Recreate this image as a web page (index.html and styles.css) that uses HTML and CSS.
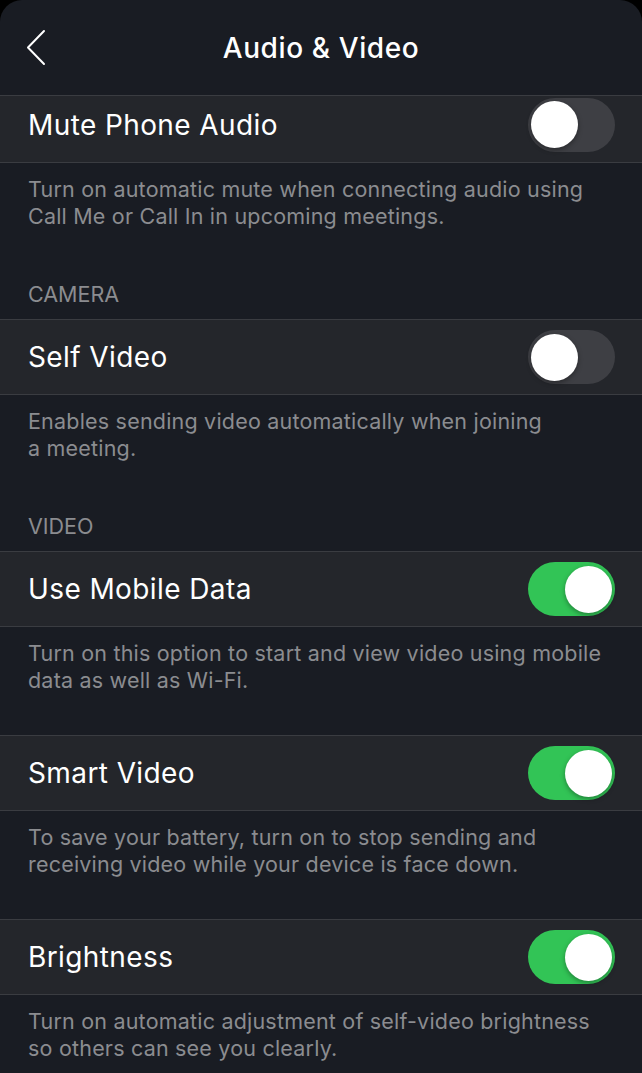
FILE: index.html
```html
<!DOCTYPE html>
<html>
<head>
<meta charset="utf-8">
<link rel="stylesheet" href="styles.css">
</head>
<body>
<div class="screen">
  <header class="nav">
    <svg class="back" width="24" height="40" viewBox="0 0 24 40"><path d="M18 2 L2 18.5 L18 35" fill="none" stroke="#fff" stroke-width="2" stroke-linecap="round" stroke-linejoin="round"/></svg>
    <h1 class="title">Audio &amp; Video</h1>
  </header>
  <main class="content">
    <div class="row row-cut">
      <span class="label">Mute Phone Audio</span>
      <span class="toggle"><span class="knob"></span></span>
    </div>
    <p class="desc">Turn on automatic mute when connecting audio using Call Me or Call In in upcoming meetings.</p>

    <div class="section">CAMERA</div>
    <div class="row">
      <span class="label">Self Video</span>
      <span class="toggle"><span class="knob"></span></span>
    </div>
    <p class="desc">Enables sending video automatically when joining<br>a meeting.</p>

    <div class="section">VIDEO</div>
    <div class="row">
      <span class="label">Use Mobile Data</span>
      <span class="toggle on"><span class="knob"></span></span>
    </div>
    <p class="desc">Turn on this option to start and view video using mobile data as well as Wi-Fi.</p>

    <div class="row">
      <span class="label">Smart Video</span>
      <span class="toggle on"><span class="knob"></span></span>
    </div>
    <p class="desc">To save your battery, turn on to stop sending and receiving video while your device is face down.</p>

    <div class="row">
      <span class="label">Brightness</span>
      <span class="toggle on"><span class="knob"></span></span>
    </div>
    <p class="desc">Turn on automatic adjustment of self-video brightness so others can see you clearly.</p>
  </main>
</div>
</body>
</html>
```
FILE: styles.css
```css
html, body {
  margin: 0;
  padding: 0;
  background: #000;
}
.screen {
  width: 642px;
  height: 1073px;
  overflow: hidden;
  background: #191c23;
  border-radius: 22px 22px 0 0;
  font-family: Inter, "Noto Sans", sans-serif;
  color: #fff;
}
.nav {
  height: 95px;
  border-bottom: 1px solid #3a3c41;
  display: flex;
  align-items: center;
  justify-content: center;
  position: relative;
}
.back {
  position: absolute;
  left: 26px;
  top: 29px;
}
.title {
  margin: 0;
  font-size: 28px;
  font-weight: 500;
  letter-spacing: 0.6px;
}
.content {
  display: flex;
  flex-direction: column;
}
.row {
  height: 74px;
  background: #24262b;
  border-top: 1px solid #3a3c41;
  border-bottom: 1px solid #3a3c41;
  display: flex;
  align-items: center;
  justify-content: space-between;
  padding: 0 27px 0 28px;
  box-sizing: content-box;
}
.row-cut {
  border-top: none;
  height: 57px;
  padding-bottom: 9px;
}
.label {
  font-size: 28px;
  font-weight: 400;
  letter-spacing: 0.4px;
}
.desc {
  margin: 0;
  padding: 13px 30px 41px 28px;
  font-size: 21.5px;
  line-height: 27px;
  color: #8b8c90;
  letter-spacing: 0.2px;
}
.section {
  padding: 10px 28px 11px;
  font-size: 21.5px;
  line-height: 27px;
  color: #8b8c90;
}
.toggle {
  width: 87px;
  height: 54px;
  border-radius: 27px;
  background: #3e3f44;
  position: relative;
  display: block;
}
.knob {
  position: absolute;
  top: 3.5px;
  left: 3px;
  width: 47px;
  height: 47px;
  border-radius: 50%;
  background: #fff;
  box-shadow: 0 2px 5px rgba(0,0,0,0.35);
}
.toggle.on {
  background: #32c456;
}
.toggle.on .knob {
  left: auto;
  right: 3px;
}
```
